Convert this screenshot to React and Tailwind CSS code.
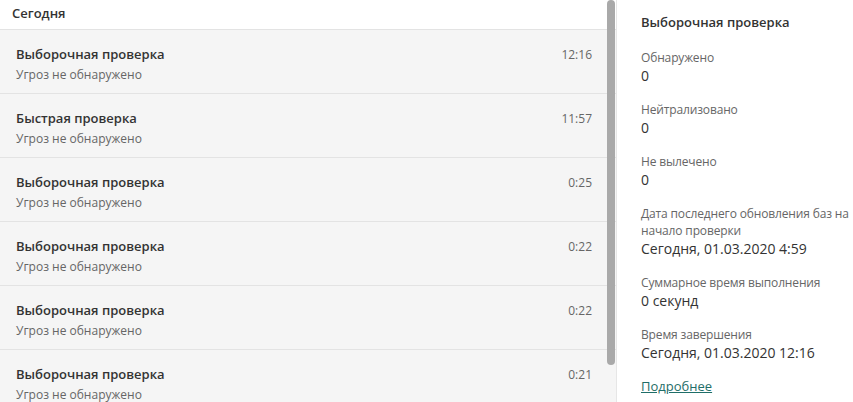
import React from "react";

const rows = [
  { t: "Выборочная проверка", time: "12:16" },
  { t: "Быстрая проверка", time: "11:57" },
  { t: "Выборочная проверка", time: "0:25" },
  { t: "Выборочная проверка", time: "0:22" },
  { t: "Выборочная проверка", time: "0:22" },
  { t: "Выборочная проверка", time: "0:21" },
];

const stats = [
  { l: "Обнаружено", v: "0" },
  { l: "Нейтрализовано", v: "0" },
  { l: "Не вылечено", v: "0" },
  { l: "Дата последнего обновления баз на начало проверки", v: "Сегодня, 01.03.2020 4:59" },
  { l: "Суммарное время выполнения", v: "0 секунд" },
  { l: "Время завершения", v: "Сегодня, 01.03.2020 12:16" },
];

export default function App() {
  return (
    <div
      className="flex w-[853px] h-[402px] overflow-hidden bg-white text-[#333]"
      style={{ fontFamily: "'Open Sans', 'Noto Sans', sans-serif" }}
    >
      <div className="relative w-[616px] h-full overflow-hidden border-r border-[#e6e6e6] box-content bg-[#f5f5f5]">
        <div className="h-[30px] bg-white border-b border-[#e3e3e3] pl-3 flex items-center text-[13px] font-semibold text-[#333] pb-[2px]">
          Сегодня
        </div>
        {rows.map((r, i) => (
          <div
            key={i}
            className="h-[64px] border-b border-[#e3e3e3] flex justify-between pl-4 pr-[24px] pt-[15px] bg-[#f5f5f5]"
          >
            <div className="flex flex-col">
              <div className="text-[13px] leading-[19px] font-semibold text-[#333]">{r.t}</div>
              <div className="text-[12px] leading-[19px] text-[#666] mt-[1px]">Угроз не обнаружено</div>
            </div>
            <div className="text-[12px] leading-[19px] text-[#666]">{r.time}</div>
          </div>
        ))}
        <div className="absolute right-[1px] top-0 w-[8px] h-[365px] rounded-full bg-[#a9a9a9]" />
      </div>
      <div className="flex-1 pl-6 pr-0 pt-[13px]">
        <div className="text-[13px] leading-[19px] font-semibold text-[#333] mb-[17px]">Выборочная проверка</div>
        <div className="flex flex-col gap-4">
          {stats.map((s, i) => (
            <div key={i} className="flex flex-col">
              <div className="text-[12px] leading-[17px] text-[#666] tracking-[-0.15px]">{s.l}</div>
              <div className="text-[14px] leading-[19px] text-[#333]">{s.v}</div>
            </div>
          ))}
        </div>
        <a className="block mt-[15px] text-[13px] leading-[19px] text-[#1f6e68] underline">Подробнее</a>
      </div>
    </div>
  );
}
